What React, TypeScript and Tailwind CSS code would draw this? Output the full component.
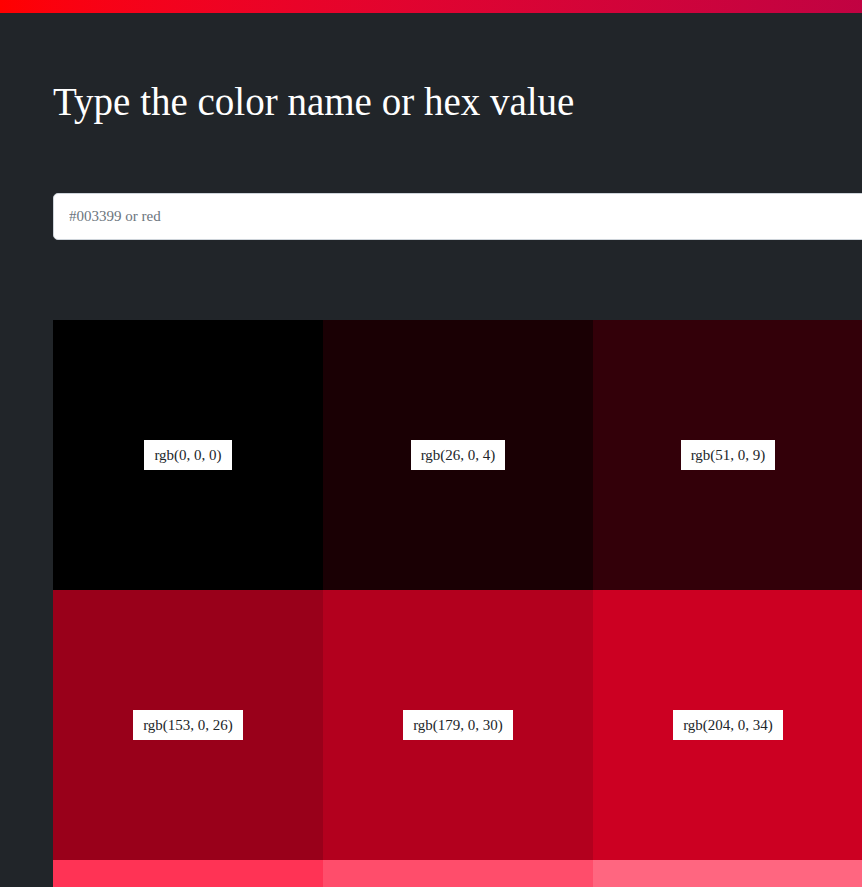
import React from "react";

const base = [255, 0, 43];
const shade = (f: number) => base.map((c) => Math.round(c * f));
const tint = (f: number) => base.map((c) => Math.round(c + (255 - c) * f));

const colors: number[][] = [];
for (let i = 0; i <= 10; i++) colors.push(shade(i / 10));
for (let i = 1; i <= 7; i++) colors.push(tint(i / 10));

export default function App() {
  return (
    <div className="w-[862px] h-[887px] overflow-hidden bg-[#212529]" style={{ fontFamily: '"Liberation Serif", "Times New Roman", serif' }}>
      <div className="h-[13px] w-[1100px] bg-gradient-to-r from-[#ff0000] to-[#b00048]" />
      <div className="pl-[53px] w-[1700px]">
        <h1 className="text-white text-[39px] leading-[1.2] mt-[66px] font-normal">Type the color name or hex value</h1>
        <input
          type="text"
          placeholder="#003399 or red"
          className="block mt-[67px] w-[1000px] h-[47px] bg-white border border-[#ced4da] rounded-[5px] px-[15px] text-[15px] placeholder:text-[#6c757d] outline-none"
        />
        <div className="mt-[80px] grid grid-cols-[repeat(6,270px)]">
          {colors.map((c, i) => {
            const s = `rgb(${c[0]}, ${c[1]}, ${c[2]})`;
            return (
              <div key={i} className="h-[270px] flex items-center justify-center" style={{ backgroundColor: s }}>
                <span className="bg-white text-[#212529] text-[15px] h-[30px] leading-[30px] px-[10px]">{s}</span>
              </div>
            );
          })}
        </div>
      </div>
    </div>
  );
}
